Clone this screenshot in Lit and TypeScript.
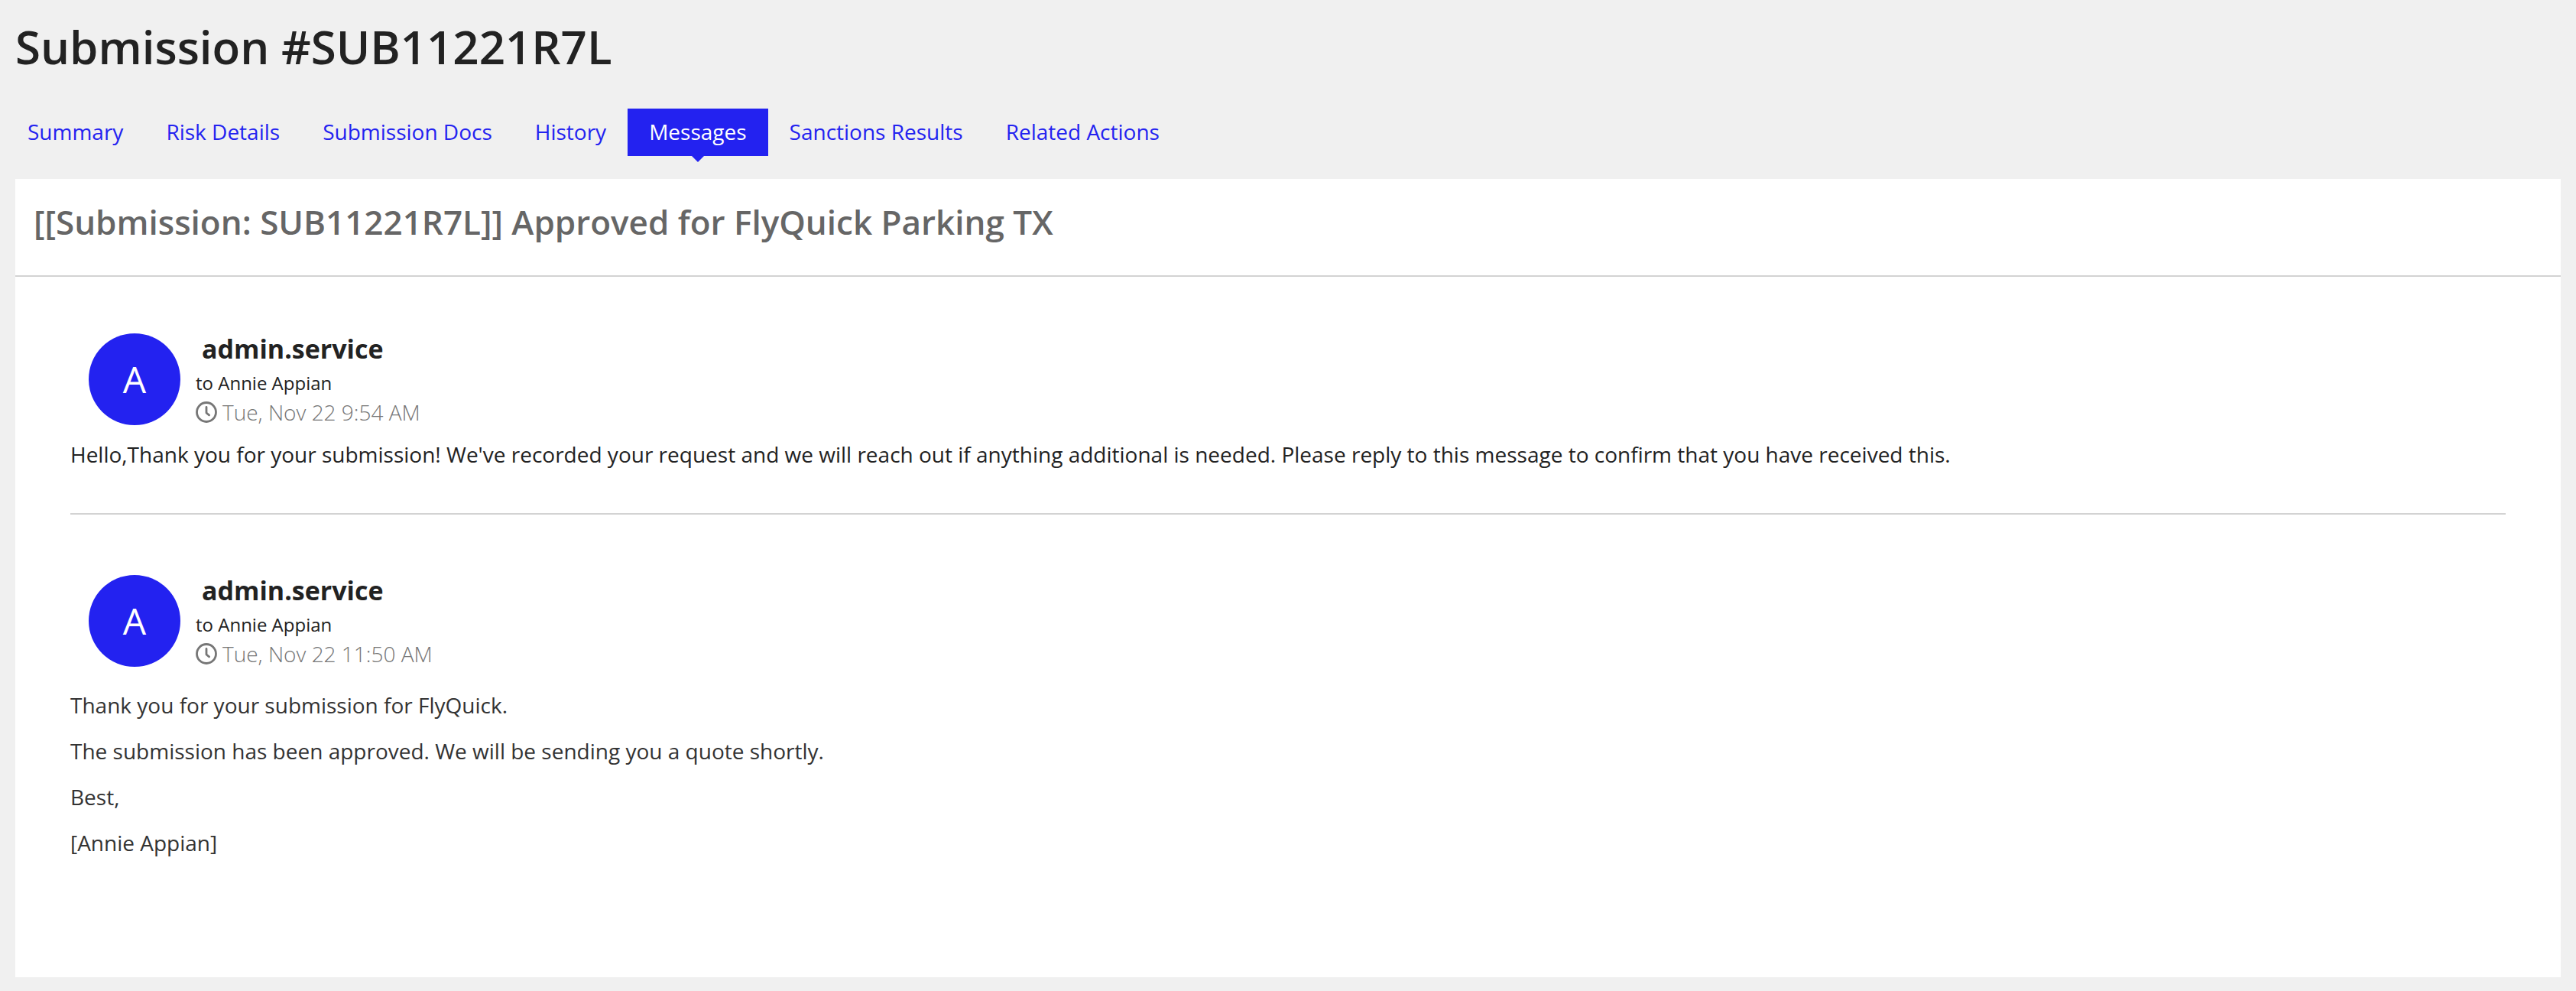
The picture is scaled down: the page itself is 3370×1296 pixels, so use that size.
import { LitElement, html, css } from "lit";
import { customElement, property } from "lit/decorators.js";

interface Message {
  sender: string;
  recipient: string;
  time: string;
  body: string[];
  rich: boolean;
}

const TABS = [
  "Summary",
  "Risk Details",
  "Submission Docs",
  "History",
  "Messages",
  "Sanctions Results",
  "Related Actions",
];

const MESSAGES: Message[] = [
  {
    sender: "admin.service",
    recipient: "Annie Appian",
    time: "Tue, Nov 22 9:54 AM",
    body: [
      "Hello,Thank you for your submission! We've recorded your request and we will reach out if anything additional is needed. Please reply to this message to confirm that you have received this.",
    ],
    rich: false,
  },
  {
    sender: "admin.service",
    recipient: "Annie Appian",
    time: "Tue, Nov 22 11:50 AM",
    body: [
      "Thank you for your submission for FlyQuick.",
      "The submission has been approved. We will be sending you a quote shortly.",
      "Best,",
      "[Annie Appian]",
    ],
    rich: true,
  },
];

@customElement("message-item")
export class MessageItem extends LitElement {
  @property({ attribute: false }) message!: Message;

  static styles = css`
    :host {
      display: block;
    }
    .head {
      display: flex;
      align-items: flex-start;
      gap: 20px;
      padding-left: 24px;
    }
    .avatar {
      display: flex;
      align-items: center;
      justify-content: center;
      flex: none;
      width: 120px;
      height: 120px;
      border-radius: 50%;
      background: #2322f0;
      color: #fff;
      font-size: 48px;
      line-height: 60px;
    }
    .name {
      margin: 0 0 7px;
      padding-left: 8px;
      font-size: 34px;
      line-height: 40px;
      font-weight: 700;
    }
    .recipient {
      font-size: 24px;
      line-height: 36px;
    }
    .time {
      display: flex;
      align-items: center;
      gap: 7px;
      color: #767676;
      font-weight: 300;
      line-height: 40px;
    }
    .clock {
      flex: none;
      width: 28px;
      height: 28px;
    }
    .body {
      display: flex;
      flex-direction: column;
      gap: 20px;
      margin-top: 15px;
    }
    .rich {
      margin-top: 27px;
      color: #333;
    }
    .text {
      margin: 0;
      line-height: 40px;
    }
  `;

  render() {
    const m = this.message;
    return html`
      <article>
        <header class="head">
          <div class="avatar" aria-hidden="true">${m.sender[0].toUpperCase()}</div>
          <div>
            <h3 class="name">${m.sender}</h3>
            <div class="recipient">to ${m.recipient}</div>
            <div class="time">
              <svg class="clock" viewBox="0 0 28 28" fill="none" stroke="currentColor" aria-hidden="true">
                <circle cx="14" cy="14" r="12.5" stroke-width="2.8" />
                <path d="M14 7.5V15L17.6 17.8" stroke-width="2.8" stroke-linecap="round" stroke-linejoin="round" />
              </svg>
              <span>${m.time}</span>
            </div>
          </div>
        </header>
        <div class="body ${m.rich ? "rich" : ""}">
          ${m.body.map((line) => html`<p class="text">${line}</p>`)}
        </div>
      </article>
    `;
  }
}

@customElement("app-root")
export class AppRoot extends LitElement {
  static styles = css`
    :host {
      display: flex;
      flex-direction: column;
      box-sizing: border-box;
      min-height: 100vh;
      padding: 21px 20px 18px;
      background: #f0f0f0;
      color: #222;
      font-family: "Open Sans", "Noto Sans", sans-serif;
      font-size: 28px;
    }
    .title {
      margin: 0;
      font-size: 60px;
      line-height: 80px;
      font-weight: 600;
    }
    .tabs {
      display: flex;
      flex-wrap: wrap;
      margin: 41px 0 30px -12px;
    }
    .tab {
      position: relative;
      padding: 10px 28px 12px;
      color: #2322f0;
      line-height: 40px;
      text-decoration: none;
    }
    .active {
      background: #2322f0;
      color: #fff;
    }
    .active::after {
      content: "";
      position: absolute;
      top: 100%;
      left: 50%;
      margin-left: -8px;
      border: 8px solid transparent;
      border-top-color: #2322f0;
      border-bottom-width: 0;
    }
    .panel {
      flex: 1;
      background: #fff;
    }
    .subject {
      margin: 0;
      padding: 26px 24px 40px;
      border-bottom: 2px solid #d3d3d3;
      color: #666;
      font-size: 44px;
      line-height: 60px;
      font-weight: 600;
    }
    .messages {
      padding: 74px 72px;
    }
    .divider {
      margin: 57px 0 79px;
      border: 0;
      border-top: 2px solid #d3d3d3;
    }
  `;

  render() {
    return html`
      <h1 class="title">Submission #SUB11221R7L</h1>
      <nav class="tabs" aria-label="Submission sections">
        ${TABS.map((tab) =>
          tab === "Messages"
            ? html`<a class="tab active" href="#" aria-current="page">${tab}</a>`
            : html`<a class="tab" href="#">${tab}</a>`
        )}
      </nav>
      <main class="panel">
        <h2 class="subject">[[Submission: SUB11221R7L]] Approved for FlyQuick Parking TX</h2>
        <div class="messages">
          ${MESSAGES.map(
            (m, i) => html`
              ${i > 0 ? html`<hr class="divider" />` : ""}
              <message-item .message=${m}></message-item>
            `
          )}
        </div>
      </main>
    `;
  }
}
